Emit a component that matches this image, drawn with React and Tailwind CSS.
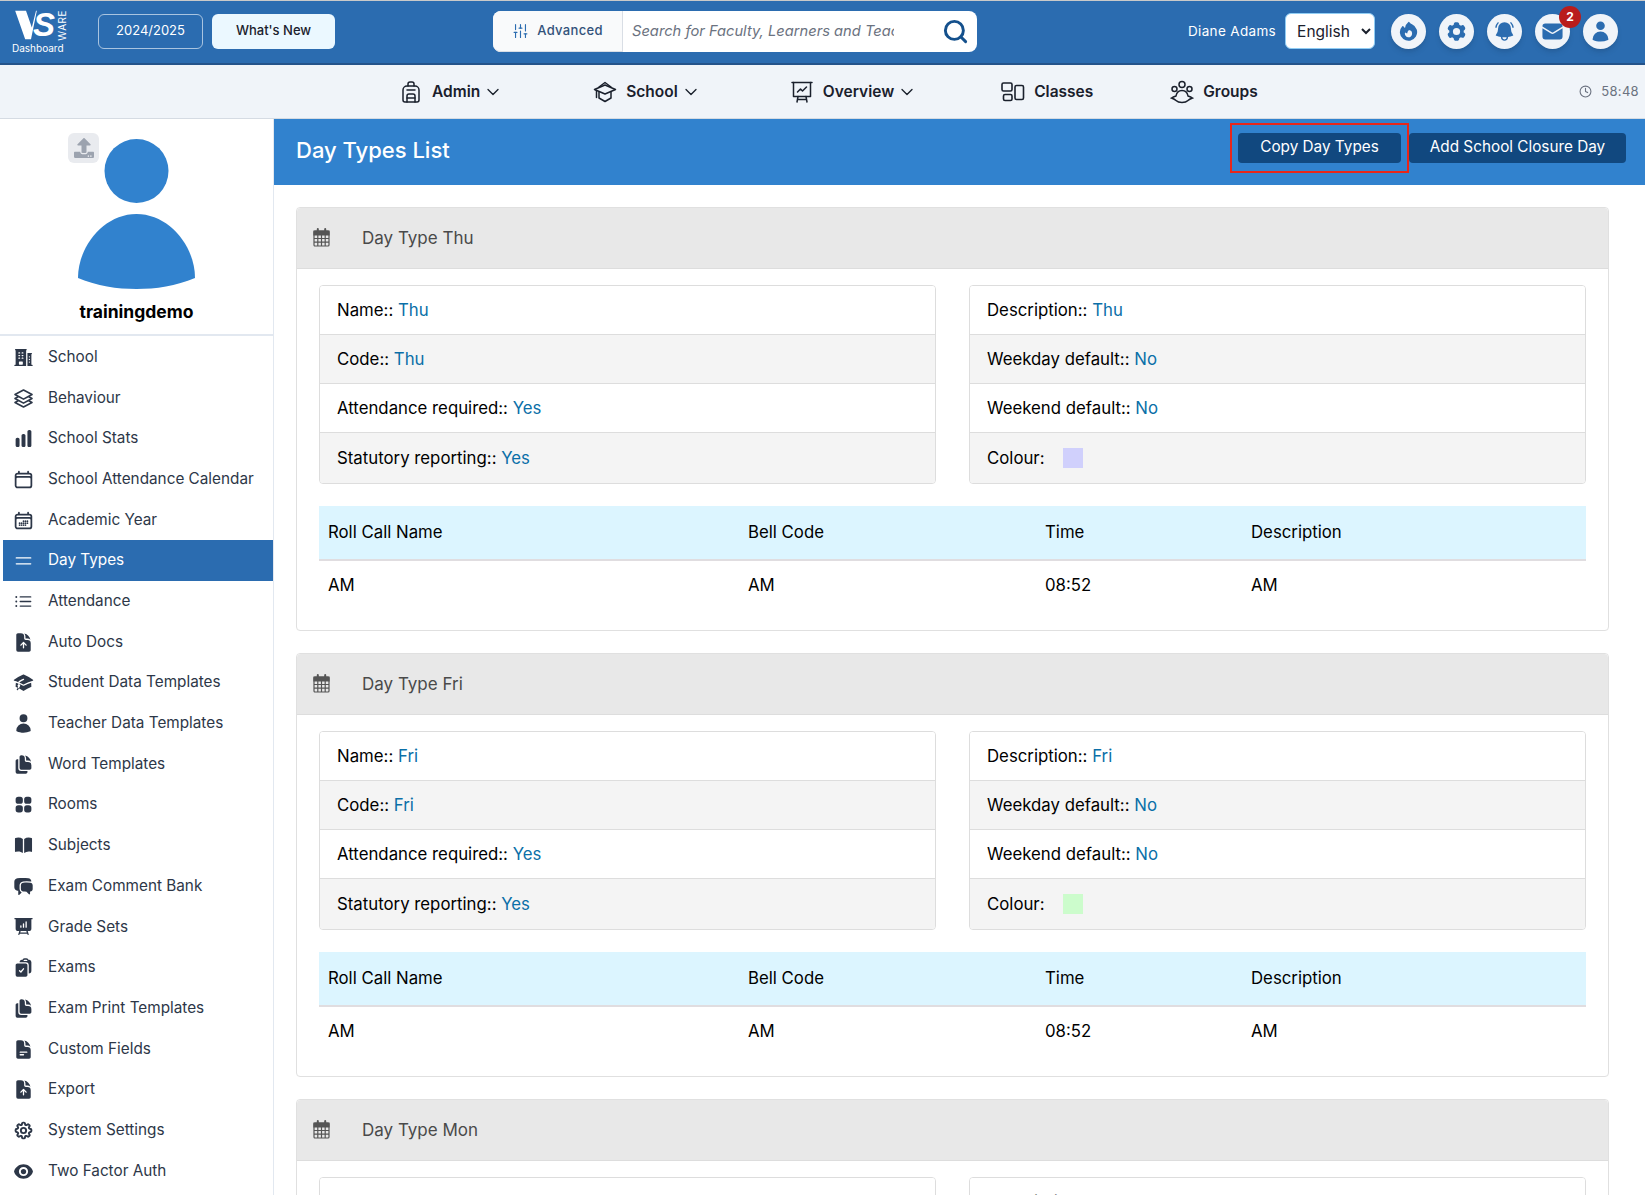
import { Backpack, ChevronDown, Clock, Search, SlidersVertical } from 'lucide-react';
import { FaUpload } from 'react-icons/fa';
import {
  HiAcademicCap,
  HiBellAlert,
  HiBookOpen,
  HiBuildingOffice2,
  HiChartBar,
  HiChatBubbleLeftRight,
  HiClipboardDocumentCheck,
  HiCog6Tooth,
  HiDocumentArrowUp,
  HiDocumentDuplicate,
  HiDocumentText,
  HiEnvelope,
  HiEye,
  HiFire,
  HiOutlineBars2,
  HiOutlineCalendar,
  HiOutlineCalendarDays,
  HiOutlineCog8Tooth,
  HiOutlineListBullet,
  HiOutlineSquare3Stack3D,
  HiPresentationChartBar,
  HiSquares2X2,
  HiUser,
} from 'react-icons/hi2';

// third value: outline icon that needs a heavier stroke
const sideItems = [
  ['School', HiBuildingOffice2],
  ['Behaviour', HiOutlineSquare3Stack3D, 1.8],
  ['School Stats', HiChartBar],
  ['School Attendance Calendar', HiOutlineCalendar, 2],
  ['Academic Year', HiOutlineCalendarDays, 2],
  ['Day Types', HiOutlineBars2],
  ['Attendance', HiOutlineListBullet],
  ['Auto Docs', HiDocumentArrowUp],
  ['Student Data Templates', HiAcademicCap],
  ['Teacher Data Templates', HiUser],
  ['Word Templates', HiDocumentDuplicate],
  ['Rooms', HiSquares2X2],
  ['Subjects', HiBookOpen],
  ['Exam Comment Bank', HiChatBubbleLeftRight],
  ['Grade Sets', HiPresentationChartBar],
  ['Exams', HiClipboardDocumentCheck],
  ['Exam Print Templates', HiDocumentDuplicate],
  ['Custom Fields', HiDocumentText],
  ['Export', HiDocumentArrowUp],
  ['System Settings', HiOutlineCog8Tooth, 2.2],
  ['Two Factor Auth', HiEye],
];

const dayTypes = [
  { name: 'Thu', colour: 'bg-[#d0d0fc]' },
  { name: 'Fri', colour: 'bg-[#ccfccc]' },
  { name: 'Mon', colour: 'bg-[#fcd0d0]' },
];

// Nav icons that the packages don't have
const CapIcon = () => (
  <svg viewBox="0 0 24 24" className="w-6 h-6" fill="none" stroke="currentColor" strokeWidth="1.5" strokeLinejoin="round" strokeLinecap="round">
    <path d="M1.5 9.5 12 5l10.5 4.5L12 14z" />
    <path d="M6 12v6l6 3.5 6-3.5v-6" />
    <path d="M6 7l6-4.5L18 7" />
    <path d="M3.5 10.5v7" />
  </svg>
);

const BoardIcon = () => (
  <svg viewBox="0 0 24 24" className="w-6 h-6" fill="none" stroke="currentColor" strokeWidth="1.5" strokeLinejoin="round" strokeLinecap="round">
    <path d="M2 2.5h20" />
    <path d="M3.5 2.5v14h17v-14" />
    <path d="M7.5 12l3-3 2 2 4-4" />
    <path d="M8 16.5 7 22M16 16.5l1 5.5M7.5 19.5h9" />
  </svg>
);

const ClassesIcon = () => (
  <svg viewBox="0 0 24 24" className="w-6 h-6" fill="none" stroke="currentColor" strokeWidth="1.6">
    <rect x="1" y="3" width="10" height="8" rx="1.5" />
    <rect x="2.5" y="14.5" width="8.5" height="6" rx="1.5" />
    <rect x="14" y="5.5" width="8.5" height="14" rx="1.5" />
  </svg>
);

const GroupsIcon = () => (
  <svg viewBox="0 0 24 24" className="w-6 h-6" fill="none" stroke="currentColor" strokeWidth="1.5" strokeLinecap="round">
    <circle cx="12" cy="4.5" r="3" />
    <circle cx="4.5" cy="9" r="2.5" />
    <circle cx="19.5" cy="9" r="2.5" />
    <path d="M12 10.5c3.500 0 5.500 2.500 6 5.500 1.500.5 3 1 4.500 2-2 .8-3.500 1.500-4.500 2.500-1.500 1.500-4 2-6 2s-4.500-.5-6-2c-1-1-2.500-1.700-4.500-2.500 1.500-1 3-1.500 4.500-2 .5-3 2.500-5.500 6-5.500z" />
  </svg>
);

const CardCalendar = () => (
  <svg viewBox="0 0 17 19" className="w-[17px] h-[19px] -mt-[2px]" fill="none" stroke="#555555" strokeWidth="1.2">
    <rect x="1" y="3" width="15" height="15" rx="1" />
    <path d="M1 3h15v4H1z" fill="#555555" />
    <path d="M1 10.500h15M1 14.200h15M4.800 7v11M8.500 7v11M12.200 7v11" />
    <path d="M4.800 1v3.500M12.200 1v3.500" strokeWidth="2" strokeLinecap="round" />
  </svg>
);

const Logo = () => (
  <div className="w-[56px] ml-[12px] flex flex-col items-start">
    <div className="flex items-start h-[30px] ml-[3px]">
      <svg viewBox="0 0 26 36" className="w-[22px] h-[30px]" fill="white">
        <polygon points="0,1 13,1 20,21 25,1 26,1 19,35 12,35" />
      </svg>
      <span className="text-white italic font-bold text-[33px] leading-[30px] -ml-[4px] font-['Liberation_Sans',sans-serif]">S</span>
      <span className="text-white text-[10px] leading-none tracking-[0.5px] [writing-mode:vertical-rl] rotate-180 ml-[2px]">WARE</span>
    </div>
    <span className="text-white text-[10px] leading-[12px] mt-[2px] whitespace-nowrap">Dashboard</span>
  </div>
);

const TopBar = () => (
  <header className="h-[65px] bg-[#2b6cb0] border-t border-t-[#c9c9c9] border-b-2 border-b-[#24538a] flex items-center">
    <Logo />
    <button className="ml-[30px] w-[105px] h-[35px] rounded-md border border-[#a9c4e0] text-white text-[13px] -mt-[2px]">2024/2025</button>
    <button className="ml-[9px] w-[123px] h-[35px] rounded-md bg-[#ebf8ff] text-[#1a202c] text-[13px] font-medium -mt-[2px]">What's New</button>
    <div className="ml-[158px] w-[484px] h-[41px] rounded-lg bg-white flex items-center -mt-[2px]">
      <div className="w-[130px] h-full flex items-center justify-center gap-2 bg-[#f9fafb] border-r border-b border-[#d9dee5] rounded-l-lg text-[#33527a]">
        <SlidersVertical className="w-[17px] h-[20px] text-[#2b6cb0]" strokeWidth={1.6} />
        <span className="text-[13px] font-medium tracking-wide">Advanced</span>
      </div>
      <input
        className="ml-[9px] w-[262px] text-[14.7px] italic outline-none placeholder:text-[#6b7280]"
        placeholder="Search for Faculty, Learners and Teachers"
      />
      <Search className="ml-[48px] w-[27px] h-[27px] text-[#14508c]" strokeWidth={2.6} />
    </div>
    <span className="ml-[211px] text-white text-[13.5px] tracking-wide -mt-[2px] whitespace-nowrap">Diane Adams</span>
    <select className="ml-[9px] w-[90px] h-[36px] rounded-md bg-white border border-[#90cdf4] pl-[7px] text-[15.5px] text-[#1a202c] -mt-[2px]">
      <option>English</option>
    </select>
    <div className="ml-[16px] flex gap-[13px] -mt-[2px]">
      {[HiFire, HiCog6Tooth, HiBellAlert, HiEnvelope, HiUser].map((Icon, i) => (
        <div key={i} className="relative w-[35px] h-[35px] rounded-full bg-[#f0f4f9] shadow-md flex items-center justify-center text-[#2b6cb0]">
          <Icon className="w-[23px] h-[23px]" />
          {i === 3 && (
            <span className="absolute -top-[8px] -right-[11px] w-[22px] h-[22px] rounded-full bg-[#b91c1c] text-white text-[12px] font-bold flex items-center justify-center">2</span>
          )}
        </div>
      ))}
    </div>
  </header>
);

const NavItem = ({ icon, label, caret, className = '' }) => (
  <div className={`flex items-center text-[#1a202c] ${className}`}>
    {icon}
    <span className="ml-[9px] text-[15.5px] font-semibold">{label}</span>
    {caret && <ChevronDown className="ml-[3px] w-[20px] h-[20px]" strokeWidth={1.6} />}
  </div>
);

const NavBar = () => (
  <nav className="h-[54px] bg-[#f0f4f9] border-b border-[#d5dbe3] flex items-center pl-[399px] pr-[6px]">
    <NavItem icon={<Backpack className="w-6 h-6" strokeWidth={1.5} />} label="Admin" caret />
    <NavItem className="ml-[90px]" icon={<CapIcon />} label="School" caret />
    <NavItem className="ml-[89px]" icon={<BoardIcon />} label="Overview" caret />
    <NavItem className="ml-[84px]" icon={<ClassesIcon />} label="Classes" />
    <NavItem className="ml-[77px]" icon={<GroupsIcon />} label="Groups" />
    <div className="ml-auto flex items-center gap-[9px] text-[#6b7280]">
      <Clock className="w-[13px] h-[13px]" />
      <span className="text-[13px] tracking-wide">58:48</span>
    </div>
  </nav>
);

const Sidebar = () => (
  <aside className="w-[274px] shrink-0 bg-white border-r border-[#e2e8f0]">
    <div className="h-[217px] border-b-2 border-[#e2e8f0] flex flex-col items-center relative">
      <button className="absolute left-[68px] top-[14px] w-[31px] h-[30px] rounded-md bg-[#e9ebef] flex items-center justify-center text-[#9ca3af]">
        <FaUpload className="w-[20px] h-[20px]" />
      </button>
      <svg viewBox="0 0 117 156" className="mt-[20px] w-[117px] h-[156px]" fill="#3182ce">
        <circle cx="58.500" cy="32" r="32" />
        <path d="M0 139C0 107 26 75 58.500 75S117 107 117 139C98 147 78 150 58.500 150S19 147 0 139Z" />
      </svg>
      <span className="mt-[5px] text-[17.500px] leading-[24px] font-bold text-black">trainingdemo</span>
    </div>
    <ul className="pt-[1px]">
      {sideItems.map(([label, Icon, stroke]) => {
        const active = label === 'Day Types';
        return (
          <li
            key={label}
            className={`h-[40.7px] flex items-center text-[15.300px] ${active ? 'ml-[3px] pl-[10px] bg-[#2b6cb0] text-white' : 'pl-[13px] text-[#2d3748]'}`}
          >
            <Icon className="w-[21px] h-[21px] shrink-0" {...(stroke ? { strokeWidth: stroke } : {})} />
            <span className="ml-[14px] whitespace-nowrap">{label}</span>
          </li>
        );
      })}
    </ul>
  </aside>
);

const Row = ({ label, value, index, swatch }) => (
  <li className={`h-[49px] last:h-[50px] px-[17px] pt-[2px] flex items-center text-[16.800px] text-black border-b border-[#dddddd] last:border-b-0 ${index % 2 ? 'bg-[#f4f4f4]' : 'bg-white'}`}>
    {swatch ? (
      <>
        <span>{label}</span>
        <span className={`ml-[18px] -mt-[2px] w-[20px] h-[20px] ${swatch}`} />
      </>
    ) : (
      <span>
        {label} <span className="text-[#0b6fa8]">{value}</span>
      </span>
    )}
  </li>
);

const DayTypeCard = ({ name, colour }) => {
  const left = [['Name::', name], ['Code::', name], ['Attendance required::', 'Yes'], ['Statutory reporting::', 'Yes']];
  const right = [['Description::', name], ['Weekday default::', 'No'], ['Weekend default::', 'No']];
  return (
    <section className="h-[424px] shrink-0 rounded border border-[#e0e0e0]">
      <div className="h-[61px] pl-[16px] pt-[1px] flex items-center bg-[#e8e8e8] border-b border-[#dddddd] rounded-t">
        <CardCalendar />
        <span className="ml-[32px] text-[17px] text-[#4a4a4a]">Day Type {name}</span>
      </div>
      <div className="px-[22px] pt-[16px]">
        <div className="flex gap-[33px]">
          <ul className="w-[617px] rounded border border-[#dddddd] overflow-hidden">
            {left.map(([label, value], i) => (
              <Row key={label} label={label} value={value} index={i} />
            ))}
          </ul>
          <ul className="w-[617px] rounded border border-[#dddddd] overflow-hidden">
            {right.map(([label, value], i) => (
              <Row key={label} label={label} value={value} index={i} />
            ))}
            <Row label="Colour:" index={3} swatch={colour} />
          </ul>
        </div>
        <table className="mt-[22px] w-[1267px] table-fixed text-[16.800px] text-black">
          <thead>
            <tr className="h-[54px] bg-[#dcf5ff] border-b-2 border-[#e0dde0] text-left">
              <th className="w-[420px] pl-[9px] font-normal">Roll Call Name</th>
              <th className="w-[297px] pl-[9px] font-normal">Bell Code</th>
              <th className="w-[206px] pl-[9px] font-normal">Time</th>
              <th className="pl-[9px] font-normal">Description</th>
            </tr>
          </thead>
          <tbody>
            <tr className="h-[50px]">
              <td className="pl-[9px]">AM</td>
              <td className="pl-[9px]">AM</td>
              <td className="pl-[9px]">08:52</td>
              <td className="pl-[9px]">AM</td>
            </tr>
          </tbody>
        </table>
      </div>
    </section>
  );
};

const App = () => (
  <div className="h-[1195px] overflow-hidden bg-white font-['Inter',sans-serif]">
    <TopBar />
    <NavBar />
    <div className="flex h-[1076px]">
      <Sidebar />
      <main className="flex-1 min-w-0 overflow-hidden">
        <div className="h-[66px] bg-[#3182ce] flex items-center justify-between pl-[22px] pr-[19px]">
          <h1 className="text-[22px] font-medium text-white -mt-[4px]">Day Types List</h1>
          <div className="flex items-center -mt-[9px]">
            <div className="border-2 border-[#e8261a] px-[6px] py-[8px]">
              <button className="block w-[163px] h-[30px] rounded bg-[#11487f] text-white text-[15.300px]">Copy Day Types</button>
            </div>
            <button className="w-[217px] h-[30px] rounded bg-[#11487f] text-white text-[15.300px]">Add School Closure Day</button>
          </div>
        </div>
        <div className="pt-[22px] pl-[22px] pr-[36px] flex flex-col gap-[22px]">
          {dayTypes.map((d) => (
            <DayTypeCard key={d.name} name={d.name} colour={d.colour} />
          ))}
        </div>
      </main>
    </div>
  </div>
);

export default App;
